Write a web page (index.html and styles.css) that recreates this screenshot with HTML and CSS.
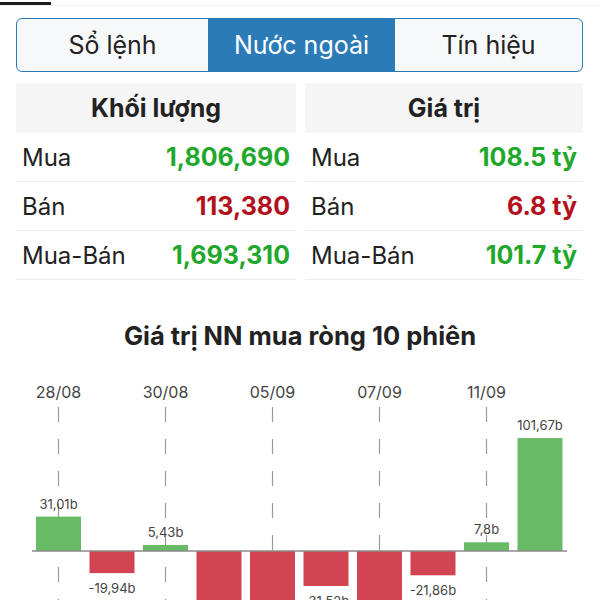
FILE: index.html
```html
<!DOCTYPE html>
<html>
<head>
  <meta charset="UTF-8">
  <title>Nước ngoài</title>
  <link rel="stylesheet" href="styles.css">
</head>
<body>
  <div class="topbar"><span class="indicator"></span></div>

  <div class="segments">
    <div class="seg">Sổ lệnh</div>
    <div class="seg active">Nước ngoài</div>
    <div class="seg">Tín hiệu</div>
  </div>

  <div class="stats">
    <div class="stat-table">
      <div class="stat-head">Khối lượng</div>
      <div class="stat-row"><span>Mua</span><span class="up">1,806,690</span></div>
      <div class="stat-row"><span>Bán</span><span class="down">113,380</span></div>
      <div class="stat-row"><span>Mua-Bán</span><span class="up">1,693,310</span></div>
    </div>
    <div class="stat-table">
      <div class="stat-head">Giá trị</div>
      <div class="stat-row"><span>Mua</span><span class="up">108.5 tỷ</span></div>
      <div class="stat-row"><span>Bán</span><span class="down">6.8 tỷ</span></div>
      <div class="stat-row"><span>Mua-Bán</span><span class="up">101.7 tỷ</span></div>
    </div>
  </div>

  <div class="chart">
    <h2 class="chart-title">Giá trị NN mua ròng 10 phiên</h2>
    <svg class="chart-svg" width="600" height="240" viewBox="0 0 600 240">
      <!-- date labels -->
      <g class="dates">
        <text x="58.5" y="38">28/08</text>
        <text x="165.5" y="38">30/08</text>
        <text x="272.5" y="38">05/09</text>
        <text x="379.5" y="38">07/09</text>
        <text x="486.5" y="38">11/09</text>
      </g>
      <!-- guide lines -->
      <g class="guides">
        <line x1="58.5" y1="47" x2="58.5" y2="240"/>
        <line x1="165.5" y1="47" x2="165.5" y2="240"/>
        <line x1="272.5" y1="47" x2="272.5" y2="240"/>
        <line x1="379.5" y1="47" x2="379.5" y2="240"/>
        <line x1="486.5" y1="47" x2="486.5" y2="240"/>
      </g>
      <!-- bars -->
      <g>
        <rect class="bar-up" x="36" y="156.6" width="45" height="34.4"/>
        <rect class="bar-down" x="89.5" y="191" width="45" height="22.1"/>
        <rect class="bar-up" x="143" y="185" width="45" height="6"/>
        <rect class="bar-down" x="196.5" y="191" width="45" height="62"/>
        <rect class="bar-down" x="250" y="191" width="45" height="65"/>
        <rect class="bar-down" x="303.5" y="191" width="45" height="35"/>
        <rect class="bar-down" x="357" y="191" width="45" height="58"/>
        <rect class="bar-down" x="410.5" y="191" width="45" height="24.3"/>
        <rect class="bar-up" x="464" y="182.3" width="45" height="8.7"/>
        <rect class="bar-up" x="517.5" y="78.1" width="45" height="112.9"/>
      </g>
      <line class="axis" x1="32" y1="191" x2="567" y2="191"/>
      <!-- value labels -->
      <g class="values">
        <text x="58.5" y="148.5">31,01b</text>
        <text x="112" y="233">-19,94b</text>
        <text x="165.5" y="177">5,43b</text>
        <text x="326" y="246">-31,52b</text>
        <text x="433" y="235">-21,86b</text>
        <text x="486.5" y="174">7,8b</text>
        <text x="540" y="70">101,67b</text>
      </g>
    </svg>
  </div>
</body>
</html>
```

FILE: styles.css
```css
body {
  margin: 0;
  padding: 0;
  background-color: #fff;
  font-family: Inter, "Noto Sans", sans-serif;
  color: #222;
}

.topbar {
  height: 5px;
  border-bottom: 1px solid #f0f0f0;
  position: relative;
}

.indicator {
  position: absolute;
  left: 0;
  top: 2px;
  width: 51px;
  height: 3px;
  background-color: #1c1c1c;
}

/* segmented control */
.segments {
  display: grid;
  grid-template-columns: 191px 187px 1fr;
  margin: 12px 17px 0 16px;
  height: 52px;
  border: 1px solid #2b7bb9;
  border-radius: 6px;
  overflow: hidden;
  background-color: #f7f8fa;
}

.seg {
  display: flex;
  align-items: center;
  justify-content: center;
  font-size: 25px;
  color: #222;
}

.seg.active {
  background-color: #2b7bb9;
  color: #fff;
}

/* stats tables */
.stats {
  display: grid;
  grid-template-columns: 280px 1fr;
  gap: 9px;
  margin: 11px 17px 0 16px;
}

.stat-head {
  height: 50px;
  display: flex;
  align-items: center;
  justify-content: center;
  background-color: #f5f5f5;
  font-size: 25px;
  font-weight: 700;
}

.stat-row {
  height: 48px;
  display: flex;
  align-items: center;
  justify-content: space-between;
  padding: 0 6px;
  border-bottom: 1px solid #ebebeb;
  font-size: 24px;
}

.stat-row .up,
.stat-row .down {
  font-size: 25px;
  font-weight: 700;
}

.up {
  color: #1fa82b;
}

.down {
  color: #b3101c;
}

/* chart */
.chart {
  margin-top: 40px;
}

.chart-title {
  margin: 0;
  height: 40px;
  line-height: 32px;
  text-align: center;
  font-size: 25.5px;
  font-weight: 700;
  color: #222;
}

.chart-svg {
  display: block;
}

.dates text {
  font-size: 16px;
  fill: #444;
  text-anchor: middle;
}

.guides line {
  stroke: #9a9a9a;
  stroke-width: 1.2;
  stroke-dasharray: 15 17;
}

.bar-up {
  fill: #68ba64;
}

.bar-down {
  fill: #d34452;
}

.axis {
  stroke: #8a8a8a;
  stroke-width: 1.5;
}

.values text {
  font-size: 13px;
  fill: #444;
  text-anchor: middle;
}
```
